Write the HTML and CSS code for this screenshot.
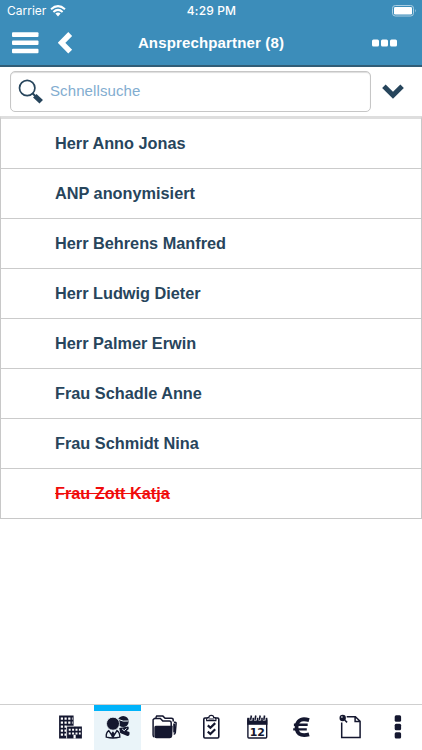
FILE: index.html
```html
<!DOCTYPE html>
<html lang="de">
<head>
<meta charset="utf-8">
<title>Ansprechpartner</title>
<link rel="stylesheet" href="styles.css">
</head>
<body>
<header class="header">
  <div class="status">
    <div class="carrier"><span>Carrier</span>
      <svg width="16" height="12" viewBox="0 0 16 12" fill="none" stroke="#fff" stroke-width="2"><path d="M1 4.2Q8-2 15 4.2M3.4 6.9Q8 2.8 12.6 6.9"/><path d="M5.4 8.6Q8 6.6 10.6 8.6L8 11.4Z" fill="#fff" stroke="none"/></svg>
    </div>
    <div class="time">4:29 PM</div>
    <svg class="battery" width="25" height="12" viewBox="0 0 25 12"><rect x=".5" y=".5" width="21" height="10.5" rx="2.8" fill="none" stroke="#a9cde2"/><rect x="2" y="2" width="18" height="7.5" rx="1.3" fill="#fff"/><path d="M23 4q1.6 1.7 0 3.5z" fill="#a9cde2"/></svg>
  </div>
  <div class="nav">
    <div class="nav-left">
      <svg width="27" height="22" viewBox="0 0 27 22" fill="#fff"><rect y="0.3" width="26.5" height="4.6" rx="1"/><rect y="8.5" width="26.5" height="4.6" rx="1"/><rect y="16.7" width="26.5" height="4.6" rx="1"/></svg>
      <svg width="15" height="22" viewBox="0 0 15 22" fill="none" stroke="#fff" stroke-width="5.4"><path d="M12.2 2L3.6 10.8L12.2 19.6"/></svg>
    </div>
    <h1 class="title">Ansprechpartner (8)</h1>
    <svg class="more" width="25" height="8" viewBox="0 0 25 8" fill="#fff"><rect y=".4" width="7" height="7" rx="1.5"/><rect x="9" y=".4" width="7" height="7" rx="1.5"/><rect x="18" y=".4" width="7" height="7" rx="1.5"/></svg>
  </div>
</header>
<section class="search">
  <div class="field">
    <svg width="26" height="26" viewBox="0 0 26 26" fill="none" stroke="#27455c"><circle cx="9.2" cy="9" r="7.7" stroke-width="1.7"/><path d="M14.7 14.5L17.5 17.3" stroke-width="2"/><path d="M16.8 16.7L23.2 22.8" stroke-width="5"/></svg>
    <span>Schnellsuche</span>
  </div>
  <svg class="expand" width="22" height="15" viewBox="0 0 22 15" fill="none" stroke="#27455c" stroke-width="5"><path d="M1.9 2.3L11 11.2L20.1 2.3"/></svg>
</section>
<ul class="list">
  <li>Herr Anno Jonas</li>
  <li>ANP anonymisiert</li>
  <li>Herr Behrens Manfred</li>
  <li>Herr Ludwig Dieter</li>
  <li>Herr Palmer Erwin</li>
  <li>Frau Schadle Anne</li>
  <li>Frau Schmidt Nina</li>
  <li class="removed">Frau Zott Katja</li>
</ul>
<nav class="tabs">
  <div></div>
  <div><svg viewBox="46.9 705 46.9 45"><path fill="#14172f" d="M59 715.5h14.5v11h8.3v12H59z"/><path stroke="#fff" stroke-width="2.2" stroke-dasharray="2.2 1.5" d="M60.7 718.7H72.5M60.7 722.7H72.5M60.7 726.7H67M60.7 730.7H66M60.7 734.7H66"/><path fill="none" stroke="#fff" stroke-width=".8" d="M66.5 738.5v-12.3h7.3"/><path stroke="#fff" stroke-width="2" stroke-dasharray="2 1.4" d="M68.6 729.7H80.6M68.6 733.6H80.6"/><path fill="#fff" d="M73.4 734.8h2.2v3.7h-2.2z"/></svg></div>
  <div class="active"><svg viewBox="93.8 705 46.9 45"><g fill="#14172f"><circle cx="123" cy="721.5" r="5.5"/><path d="M119 728l9-1.5q1 1 .4 2.8l-2 1.7 2.8 1q.8 4-2 4L120 733z"/></g><path d="M118 719.4q5 2.6 10.2 1.6" fill="none" stroke="#eaf4f9" stroke-width="1"/><path d="M122 729l2 1.8 2.3-2.3" fill="none" stroke="#eaf4f9"/><circle cx="112.8" cy="723.7" r="6.5" fill="#14172f" stroke="#eaf4f9" stroke-width=".8"/><path d="M108.6 730.6q-3 2-2.5 6.5q6.5 1.7 13.5 0q.2-4.5-2.8-6.5l-4 6.4z" fill="#eaf4f9" stroke="#14172f" stroke-width="1.4"/><path d="M112.7 731.2l1.6 2-.5 4h-2.2l-.5-4z" fill="#14172f"/></svg></div>
  <div><svg viewBox="140.7 705 46.9 45" fill="none" stroke="#14172f" stroke-width="1.5"><path d="M155.4 717.8l1-1.7h6.2l2.2 2.2h6.3q1.8 0 1.8 1.7v1.4M173.6 722.3h1.2q1.1 0 1 1.2l-.8 9.2q-.2 1.3-1.6 1.6" /><path d="M173.9 723.5v9" stroke-width="2"/><path d="M154 737q-1.2-.3-1.2-2v-15.2l1.3-1.3h6l2.4 2.6h6.6q1.8 0 1.8 1.8v3"/><path fill="#14172f" d="M155.4 726.6h16.2l-.4 9.3q-.2 1.6-1.8 1.6h-13.2q-1.4 0-1.4-1.6v-8.3q0-1 .6-1z"/></svg></div>
  <div><svg viewBox="187.6 705 46.9 45" fill="none" stroke="#14172f"><rect x="203.4" y="718" width="15" height="20" rx="1.2" stroke-width="1.6"/><path fill="#fff" stroke-width="1.2" d="M206.3 720.6q-.6-3 2.2-3.2 0-2 2.4-2t2.4 2q2.8.2 2.2 3.2z"/><path d="M208 719h6" stroke-width="1"/><path stroke-width="2.2" d="M207.4 725.4l2.6 2.3 4.8-4.6M207.4 731.6l2.6 2.4 4.8-4.7"/></svg></div>
  <div><svg viewBox="234.5 705 46.9 45"><rect x="248.4" y="719" width="18.8" height="19" rx="1" fill="#fff" stroke="#14172f" stroke-width="1.4"/><path fill="#14172f" d="M247.7 717.8h20.2v7h-20.2z"/><path stroke="#fff" stroke-width="2.8" d="M251.5 717v3.6M255.9 717v3.6M260.3 717v3.6M264.7 717v3.6"/><path stroke="#14172f" stroke-width="1.6" d="M251.1 719.8l.8-4.3M255.5 719.8l.8-4.3M259.9 719.8l.8-4.3M264.3 719.8l.8-4.3"/><text x="257.8" y="735.6" text-anchor="middle" class="day">12</text></svg></div>
  <div><svg viewBox="281.4 705 46.9 45" fill="none" stroke="#14172f"><path stroke-width="3.8" d="M309.5 720.1q-10-3-12.2 4.4-1.4 6 2.2 9.2 3.6 2.5 10 .7"/><path stroke-width="2.4" d="M294.3 724.8h13.8M293.6 729.4h13.6"/></svg></div>
  <div><svg viewBox="328.3 705 46.9 45" fill="none" stroke="#14172f" stroke-width="1.5"><path d="M342 722.5v15h18.4v-16.2l-4.7-4.6h-8.7M355.4 716.8v4.8h5M345.2 720.2l2.2 2.2"/><circle cx="343" cy="718" r="3.2" fill="#14172f" stroke="none"/><circle cx="342.2" cy="717" r=".8" fill="#fff" stroke="none"/></svg></div>
  <div><svg viewBox="375.2 705 46.9 45" fill="#14172f"><rect x="394.9" y="715.3" width="6.4" height="6.4" rx="1.5"/><rect x="394.9" y="723.8" width="6.4" height="6.4" rx="1.5"/><rect x="394.9" y="732.2" width="6.4" height="6.4" rx="1.5"/></svg></div>
</nav>
</body>
</html>
```
FILE: styles.css
```css
* { box-sizing: border-box; }
body {
  margin: 0;
  height: 750px;
  display: flex;
  flex-direction: column;
  background: #fff;
  color: #27455c;
  font-family: "Liberation Sans", Arial, sans-serif;
  overflow: hidden;
}
svg { display: block; }
.header {
  height: 67px;
  background: #3c8dba;
  border-bottom: 2px solid #315d77;
  color: #fff;
}
.status {
  height: 22px;
  padding: 0 6px 0 7px;
  display: grid;
  grid-template-columns: 1fr auto 1fr;
  align-items: center;
  font: 12px/22px Inter, sans-serif;
}
.carrier { display: flex; align-items: center; gap: 4px; }
.carrier svg { margin-top: -1px; }
.time { font-weight: 500; letter-spacing: 0.15px; }
.battery { justify-self: end; margin-right: -1px; }
.nav {
  height: 42px;
  padding: 0 25px 0 12px;
  display: grid;
  grid-template-columns: 1fr auto 1fr;
  align-items: center;
}
.nav-left { display: flex; gap: 19px; }
.title { margin: 0 0 0 13px; font-size: 15px; line-height: 20px; letter-spacing: 0.15px; }
.more { justify-self: end; }
.search {
  height: 49px;
  padding: 4px 18px 0 10px;
  display: flex;
  align-items: flex-start;
  justify-content: space-between;
}
.field {
  width: 361px;
  height: 41px;
  padding: 0 7px;
  display: flex;
  align-items: center;
  gap: 6px;
  border: 1px solid #c6c6c6;
  border-radius: 5px;
  box-shadow: inset 0 1px 1px #ddd;
  color: #82add0;
  font-size: 15px;
}
.field span { margin-top: -2px; letter-spacing: 0.1px; }
.expand { margin-top: 13px; }
.list {
  margin: 0;
  padding: 0;
  list-style: none;
  border: 1px solid #c8c8c8;
  border-top: 3px solid #dedede;
}
.list li {
  height: 50px;
  padding-left: 54px;
  border-bottom: 1px solid #cbcbcb;
  font-size: 16.3px;
  font-weight: bold;
  line-height: 49px;
}
.list li:last-child { height: 49px; border-bottom: 0; }
.list .removed { color: #f00b0b; text-decoration: line-through; }
.tabs {
  height: 46px;
  margin-top: auto;
  border-top: 1px solid #cfcfcf;
  display: grid;
  grid-template-columns: repeat(9, 1fr);
}
.tabs svg { width: 100%; height: 45px; }
.active { background: linear-gradient(#00b3fa 6px, #eaf4f9 6px); }
.day { font: bold 11px "DejaVu Sans", sans-serif; fill: #14172f; }
```
